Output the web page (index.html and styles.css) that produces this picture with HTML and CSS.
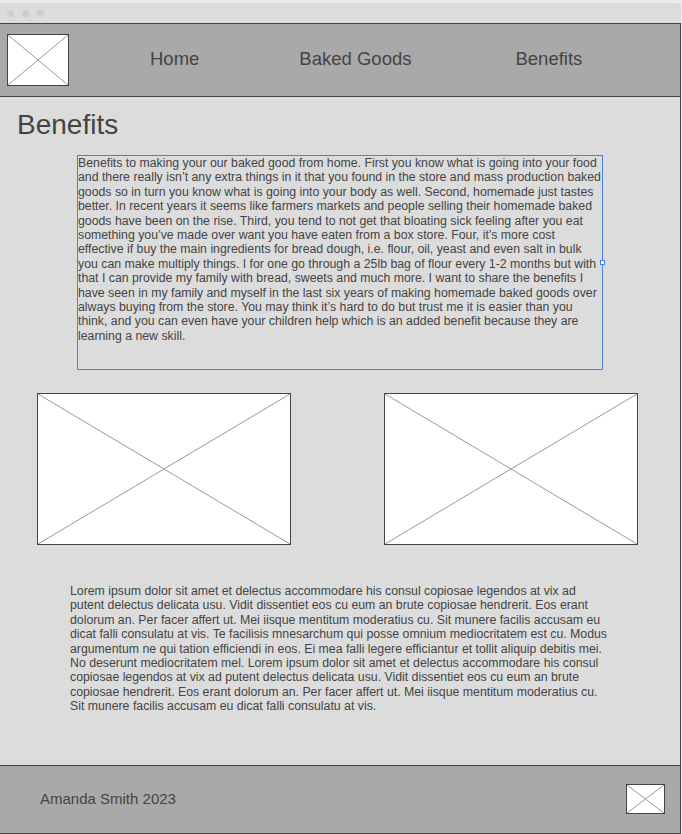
FILE: index.html
```html
<!DOCTYPE html>
<html lang="en">

<head>
    <meta charset="UTF-8">
    <meta name="viewport" content="width=device-width, initial-scale=1.0">
    <title>Benefits</title>
    <link rel="stylesheet" href="styles.css">
</head>

<body>
    <div class="window">
        <div class="titlebar">
            <span class="dot"></span>
            <span class="dot"></span>
            <span class="dot"></span>
        </div>
        <div class="frame">
            <header class="site-header">
                <div class="placeholder logo">
                    <svg viewBox="0 0 100 100" preserveAspectRatio="none">
                        <line x1="0" y1="0" x2="100" y2="100" vector-effect="non-scaling-stroke"></line>
                        <line x1="100" y1="0" x2="0" y2="100" vector-effect="non-scaling-stroke"></line>
                    </svg>
                </div>
                <nav class="nav">
                    <a href="#">Home</a>
                    <a href="#">Baked Goods</a>
                    <a href="#">Benefits</a>
                </nav>
            </header>

            <main class="content">
                <h1>Benefits</h1>
                <div class="textbox">Benefits to making your our baked good from home. First you know what is going into your food and there really isn’t any extra things in it that you found in the store and mass production baked goods so in turn you know what is going into your body as well. Second, homemade just tastes better. In recent years it seems like farmers markets and people selling their homemade baked goods have been on the rise. Third, you tend to not get that bloating sick feeling after you eat something you’ve made over want you have eaten from a box store. Four, it’s more cost effective if buy the main ingredients for bread dough, i.e. flour, oil, yeast and even salt in bulk you can make multiply things. I for one go through a 25lb bag of flour every 1-2 months but with that I can provide my family with bread, sweets and much more. I want to share the benefits I have seen in my family and myself in the last six years of making homemade baked goods over always buying from the store. You may think it’s hard to do but trust me it is easier than you think, and you can even have your children help which is an added benefit because they are learning a new skill.</div>

                <div class="images">
                    <div class="placeholder photo">
                        <svg viewBox="0 0 100 100" preserveAspectRatio="none">
                            <line x1="0" y1="0" x2="100" y2="100" vector-effect="non-scaling-stroke"></line>
                            <line x1="100" y1="0" x2="0" y2="100" vector-effect="non-scaling-stroke"></line>
                        </svg>
                    </div>
                    <div class="placeholder photo">
                        <svg viewBox="0 0 100 100" preserveAspectRatio="none">
                            <line x1="0" y1="0" x2="100" y2="100" vector-effect="non-scaling-stroke"></line>
                            <line x1="100" y1="0" x2="0" y2="100" vector-effect="non-scaling-stroke"></line>
                        </svg>
                    </div>
                </div>

                <p class="lorem">Lorem ipsum dolor sit amet et delectus accommodare his consul copiosae legendos at vix ad putent delectus delicata usu. Vidit dissentiet eos cu eum an brute copiosae hendrerit. Eos erant dolorum an. Per facer affert ut. Mei iisque mentitum moderatius cu. Sit munere facilis accusam eu dicat falli consulatu at vis. Te facilisis mnesarchum qui posse omnium mediocritatem est cu. Modus argumentum ne qui tation efficiendi in eos. Ei mea falli legere efficiantur et tollit aliquip debitis mei. No deserunt mediocritatem mel. Lorem ipsum dolor sit amet et delectus accommodare his consul copiosae legendos at vix ad putent delectus delicata usu. Vidit dissentiet eos cu eum an brute copiosae hendrerit. Eos erant dolorum an. Per facer affert ut. Mei iisque mentitum moderatius cu. Sit munere facilis accusam eu dicat falli consulatu at vis.</p>
            </main>

            <footer class="site-footer">
                <span class="copyright">Amanda Smith 2023</span>
                <div class="placeholder footer-icon">
                    <svg viewBox="0 0 100 100" preserveAspectRatio="none">
                        <line x1="0" y1="0" x2="100" y2="100" vector-effect="non-scaling-stroke"></line>
                        <line x1="100" y1="0" x2="0" y2="100" vector-effect="non-scaling-stroke"></line>
                    </svg>
                </div>
            </footer>
        </div>
    </div>
</body>

</html>
```

FILE: styles.css
```css
body {
    margin: 0;
    background-color: #ececec;
    font-family: "Liberation Sans", Arial, sans-serif;
    color: #444;
}

.window {
    width: 682px;
    margin-top: 3px;
    height: 831px;
    display: flex;
    flex-direction: column;
}

.titlebar {
    height: 20px;
    background-color: #dcdcdc;
    border-radius: 0 4px 0 0;
    margin-right: 1px;
    display: flex;
    align-items: center;
    gap: 8px;
    padding-left: 7px;
}

.dot {
    width: 7px;
    height: 7px;
    border-radius: 50%;
    background-color: #cdcdcd;
}

.frame {
    flex: 1;
    display: flex;
    flex-direction: column;
    border: 1px solid #444;
    border-left: none;
    margin-right: 1px;
}

.placeholder {
    background-color: #fff;
    border: 1px solid #444;
    box-sizing: border-box;
}

.placeholder svg {
    display: block;
    width: 100%;
    height: 100%;
}

.placeholder line {
    stroke: #999;
    stroke-width: 1;
}

.site-header {
    height: 72px;
    background-color: #a9a9a9;
    border-bottom: 1px solid #444;
    display: flex;
    align-items: center;
    padding-left: 7px;
}

.logo {
    width: 62px;
    height: 52px;
}

.nav {
    display: flex;
    gap: 100px;
    margin-left: 81px;
    margin-top: -2px;
}

.nav a {
    color: #444;
    text-decoration: none;
    font-size: 18.5px;
}

.nav a:last-child {
    margin-left: 4px;
}

.content {
    flex: 1;
    background-color: #dcdcdc;
}

h1 {
    font-size: 28px;
    font-weight: normal;
    line-height: 32px;
    margin: 12px 0 0 17px;
}

.textbox {
    position: relative;
    width: 524px;
    height: 213px;
    margin: 14px 0 0 77px;
    border: 1px solid #4a80e8;
    font-size: 12.3px;
    line-height: 14.4px;
}

.textbox::after {
    content: "";
    position: absolute;
    right: -3px;
    top: 104px;
    width: 3px;
    height: 3px;
    border: 1px solid #4a80e8;
    background-color: #fff;
}

.images {
    display: flex;
    gap: 93px;
    margin: 23px 0 0 37px;
}

.photo {
    width: 254px;
    height: 152px;
}

.lorem {
    width: 542px;
    margin: 39px 0 0 70px;
    font-size: 12.3px;
    line-height: 14.4px;
}

.site-footer {
    height: 67px;
    background-color: #a9a9a9;
    border-top: 1px solid #444;
    display: flex;
    align-items: center;
    justify-content: space-between;
    padding: 0 15px 0 40px;
    font-size: 15px;
}

.copyright {
    margin-top: -2px;
}

.footer-icon {
    width: 39px;
    height: 30px;
    margin-top: -2px;
}
```
